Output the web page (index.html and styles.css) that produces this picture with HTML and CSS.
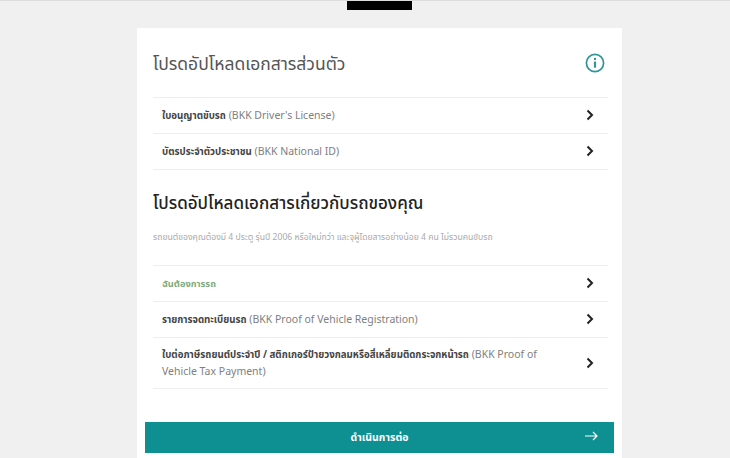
FILE: index.html
```html
<!DOCTYPE html>
<html lang="th">
<head>
  <meta charset="UTF-8">
  <title>อัปโหลดเอกสาร</title>
  <link rel="stylesheet" href="styles.css">
</head>
<body>
  <div class="topbar"><div class="logo"></div></div>
  <main class="card">
    <div class="head">
      <h2 class="title muted">โปรดอัปโหลดเอกสารส่วนตัว</h2>
      <svg class="info" width="20" height="20" viewBox="0 0 20 20" fill="none">
        <circle cx="10" cy="10" r="8.6" stroke="#2f9597" stroke-width="1.7"/>
        <circle cx="10" cy="5.9" r="1.2" fill="#2f9597"/>
        <path d="M10 8.5v6.2" stroke="#2f9597" stroke-width="2.2"/>
      </svg>
    </div>
    <ul class="list">
      <li class="row">
        <span class="label"><b>ใบอนุญาตขับรถ</b> (BKK Driver's License)</span>
        <svg class="chev" width="8" height="12" viewBox="0 0 8 12" fill="none"><path d="M1.5 1.5 6 6l-4.5 4.5" stroke="#222" stroke-width="2"/></svg>
      </li>
      <li class="row">
        <span class="label"><b>บัตรประจำตัวประชาชน</b> (BKK National ID)</span>
        <svg class="chev" width="8" height="12" viewBox="0 0 8 12" fill="none"><path d="M1.5 1.5 6 6l-4.5 4.5" stroke="#222" stroke-width="2"/></svg>
      </li>
    </ul>

    <h2 class="title second">โปรดอัปโหลดเอกสารเกี่ยวกับรถของคุณ</h2>
    <p class="note">รถยนต์ของคุณต้องมี 4 ประตู รุ่นปี 2006 หรือใหม่กว่า และจุผู้โดยสารอย่างน้อย 4 คน ไม่รวมคนขับรถ</p>
    <ul class="list">
      <li class="row">
        <span class="label green">ฉันต้องการรถ</span>
        <svg class="chev" width="8" height="12" viewBox="0 0 8 12" fill="none"><path d="M1.5 1.5 6 6l-4.5 4.5" stroke="#222" stroke-width="2"/></svg>
      </li>
      <li class="row">
        <span class="label"><b>รายการจดทะเบียนรถ</b> (BKK Proof of Vehicle Registration)</span>
        <svg class="chev" width="8" height="12" viewBox="0 0 8 12" fill="none"><path d="M1.5 1.5 6 6l-4.5 4.5" stroke="#222" stroke-width="2"/></svg>
      </li>
      <li class="row tall">
        <span class="label"><b>ใบต่อภาษีรถยนต์ประจำปี / สติกเกอร์ป้ายวงกลมหรือสี่เหลี่ยมติดกระจกหน้ารถ</b> (BKK Proof of Vehicle Tax Payment)</span>
        <svg class="chev" width="8" height="12" viewBox="0 0 8 12" fill="none"><path d="M1.5 1.5 6 6l-4.5 4.5" stroke="#222" stroke-width="2"/></svg>
      </li>
    </ul>

    <button class="next">
      <span>ดำเนินการต่อ</span>
      <svg class="arrow" width="13" height="10" viewBox="0 0 13 10" fill="none"><path d="M0 5h12M8 1l4 4-4 4" stroke="#fff" stroke-width="1.2"/></svg>
    </button>
  </main>
</body>
</html>
```

FILE: styles.css
```css
html, body {
  margin: 0;
  padding: 0;
}
body {
  height: 458px;
  overflow: hidden;
  background: #f0f0f0;
  font-family: "Noto Sans", "Noto Sans Thai", "DejaVu Sans", sans-serif;
  color: #555;
}
.topbar {
  height: 28px;
  border-top: 1px solid #ddd;
  box-sizing: border-box;
}
.logo {
  width: 65px;
  height: 9px;
  margin-left: 347px;
  background: #000;
}
.card {
  width: 485px;
  height: 430px;
  margin-left: 137px;
  box-sizing: border-box;
  padding: 0 8px;
  background: #fff;
}
.head {
  height: 69px;
  padding: 0 8px;
  display: flex;
  align-items: center;
  justify-content: space-between;
  box-sizing: border-box;
}
.info {
  margin-right: 1px;
}
.title {
  margin: 0;
  font-size: 17px;
  line-height: 24px;
  font-weight: 500;
  color: #222;
}
.title.muted {
  font-size: 17.5px;
  font-weight: 400;
  color: #555;
}
.title.second {
  margin: 21px 8px 0;
}
.note {
  margin: 16px 8px 0;
  height: 34px;
  font-size: 8.65px;
  line-height: 12px;
  color: #aaa;
}
.list {
  list-style: none;
  margin: 0 6px 0 8px;
  padding: 0;
  border-top: 1px solid #eee;
}
.row {
  min-height: 35px;
  border-bottom: 1px solid #eee;
  padding: 0 14px 0 9px;
  display: flex;
  align-items: center;
  justify-content: space-between;
}
.row.tall {
  min-height: 50px;
}
.label {
  font-size: 10.5px;
  line-height: 17px;
  color: #808080;
  width: 385px;
}
.label b {
  font-size: 9.7px;
  color: #444;
}
.label.green {
  font-size: 9.3px;
  color: #7dab7d;
  font-weight: 700;
}
.chev {
  margin-bottom: 1px;
}
.next {
  width: 469px;
  height: 31px;
  margin: 33px 0 0;
  padding: 0;
  display: block;
  position: relative;
  border: 0;
  background: #0e8f92;
  color: #fff;
  font-family: inherit;
  font-size: 10.5px;
  font-weight: 700;
  text-align: center;
}
.arrow {
  position: absolute;
  right: 16px;
  top: 9px;
}
```
